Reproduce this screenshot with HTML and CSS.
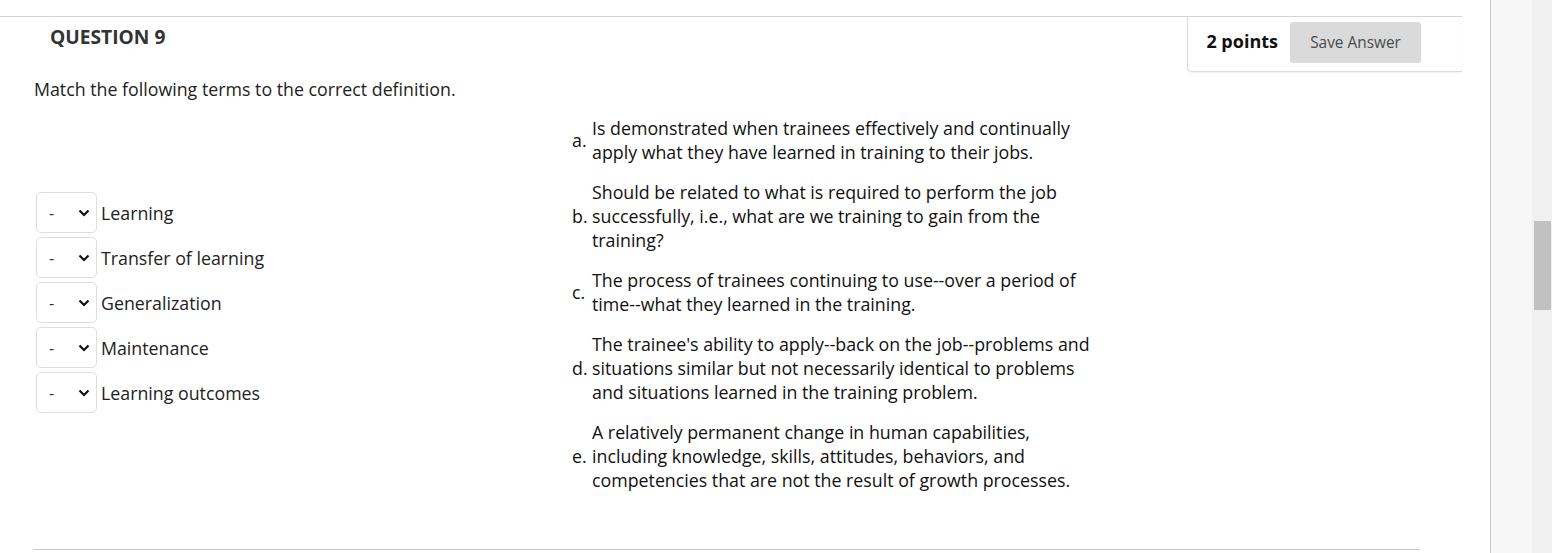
FILE: index.html
```html
<!DOCTYPE html>
<html lang="en">
<head>
<meta charset="utf-8">
<title>Question 9</title>
<link rel="stylesheet" href="styles.css">
</head>
<body>
<div class="page">
  <main class="main">
    <div class="question">
      <div class="header">
        <h2 class="qtitle">QUESTION 9</h2>
        <div class="points">
          <span class="pts">2 points</span>
          <button class="save" type="button">Save Answer</button>
        </div>
      </div>
      <p class="prompt">Match the following terms to the correct definition.</p>
      <div class="match">
        <div class="terms">
          <div class="term"><span class="sel"><span class="dash">-</span><svg class="chev" width="12" height="8" viewBox="0 0 12 8"><path d="M1.5 1.5 L6 6 L10.5 1.5" fill="none" stroke="#111" stroke-width="2.2"/></svg></span><span class="tlabel">Learning</span></div>
          <div class="term"><span class="sel"><span class="dash">-</span><svg class="chev" width="12" height="8" viewBox="0 0 12 8"><path d="M1.5 1.5 L6 6 L10.5 1.5" fill="none" stroke="#111" stroke-width="2.2"/></svg></span><span class="tlabel">Transfer of learning</span></div>
          <div class="term"><span class="sel"><span class="dash">-</span><svg class="chev" width="12" height="8" viewBox="0 0 12 8"><path d="M1.5 1.5 L6 6 L10.5 1.5" fill="none" stroke="#111" stroke-width="2.2"/></svg></span><span class="tlabel">Generalization</span></div>
          <div class="term"><span class="sel"><span class="dash">-</span><svg class="chev" width="12" height="8" viewBox="0 0 12 8"><path d="M1.5 1.5 L6 6 L10.5 1.5" fill="none" stroke="#111" stroke-width="2.2"/></svg></span><span class="tlabel">Maintenance</span></div>
          <div class="term"><span class="sel"><span class="dash">-</span><svg class="chev" width="12" height="8" viewBox="0 0 12 8"><path d="M1.5 1.5 L6 6 L10.5 1.5" fill="none" stroke="#111" stroke-width="2.2"/></svg></span><span class="tlabel">Learning outcomes</span></div>
        </div>
        <div class="defs">
          <div class="def"><span class="letter">a.</span><span class="dtext">Is demonstrated when trainees effectively and continually apply what they have learned in training to their jobs.</span></div>
          <div class="def"><span class="letter">b.</span><span class="dtext">Should be related to what is required to perform the job successfully, i.e., what are we training to gain from the training?</span></div>
          <div class="def"><span class="letter">c.</span><span class="dtext">The process of trainees continuing to use--over a period of time--what they learned in the training.</span></div>
          <div class="def"><span class="letter">d.</span><span class="dtext">The trainee's ability to apply--back on the job--problems and situations similar but not necessarily identical to problems and situations learned in the training problem.</span></div>
          <div class="def"><span class="letter">e.</span><span class="dtext">A relatively permanent change in human capabilities, including knowledge, skills, attitudes, behaviors, and competencies that are not the result of growth processes.</span></div>
        </div>
      </div>
      <div class="bottomline"></div>
    </div>
  </main>
  <aside class="side"></aside>
  <div class="scrollbar"><div class="thumb"></div></div>
</div>
</body>
</html>
```
FILE: styles.css
```css
html, body {
  margin: 0;
  padding: 0;
  background: #fff;
}
body {
  font-family: "Open Sans", "Liberation Sans", sans-serif;
  color: #222;
  font-size: 17.8px;
  line-height: 24px;
  overflow: hidden;
}
.page {
  display: flex;
  width: 1552px;
  height: 553px;
  overflow: hidden;
}
.main {
  width: 1490px;
  flex: none;
  padding-top: 16px;
}
.question {
  width: 1462px;
}
.header {
  border-top: 1px solid #d4d4d4;
  display: flex;
  justify-content: space-between;
  align-items: flex-start;
}
.qtitle {
  margin: 0;
  padding: 8px 0 0 50px;
  font-size: 19.2px;
  line-height: 24px;
  font-weight: 700;
  color: #333;
}
.points {
  display: flex;
  align-items: center;
  gap: 12px;
  padding: 5px 41px 8px 18px;
  border-left: 1px solid #dcdcdc;
  border-bottom: 1px solid #dcdcdc;
  border-bottom-left-radius: 5px;
  box-shadow: 0 1px 2px rgba(0,0,0,0.06);
}
.pts {
  font-size: 18px;
  font-weight: 700;
  color: #111;
  line-height: 24px;
  margin-bottom: 3px;
}
.save {
  width: 131px;
  height: 41px;
  border: none;
  border-radius: 3px;
  background: #dadada;
  color: #494c4e;
  font-family: "Open Sans", "Liberation Sans", sans-serif;
  font-size: 15.4px;
  padding: 0;
}
.prompt {
  margin: 5px 0 7px 34px;
  color: #222;
}
.match {
  display: flex;
  align-items: center;
  padding-left: 36px;
}
.terms {
  width: 536px;
  flex: none;
  display: flex;
  flex-direction: column;
  gap: 4px;
  margin-bottom: 3px;
}
.term {
  display: flex;
  align-items: center;
}
.sel {
  box-sizing: border-box;
  width: 61px;
  height: 41px;
  border: 1px solid #dedede;
  border-radius: 5px;
  display: flex;
  align-items: center;
  padding-left: 12px;
}
.dash {
  width: 29px;
  color: #333;
  font-size: 16px;
}
.chev {
  display: block;
}
.tlabel {
  margin-left: 4px;
}
.defs {
  display: flex;
  flex-direction: column;
}
.def {
  display: flex;
  align-items: center;
  padding: 8px 0;
  color: #111;
}
.letter {
  width: 20px;
  flex: none;
}
.dtext {
  width: 508px;
}
.bottomline {
  margin: 49px 42px 0 33px;
  border-top: 1px solid #c8c8c8;
}
.side {
  width: 41px;
  flex: none;
  border-left: 1px solid #c6c6c6;
  background: #f7f7f7;
}
.scrollbar {
  width: 20px;
  flex: none;
  background: #f0f0f0;
  position: relative;
}
.thumb {
  position: absolute;
  left: 2px;
  top: 221px;
  width: 17px;
  height: 89px;
  background: #c1c1c1;
}
```
